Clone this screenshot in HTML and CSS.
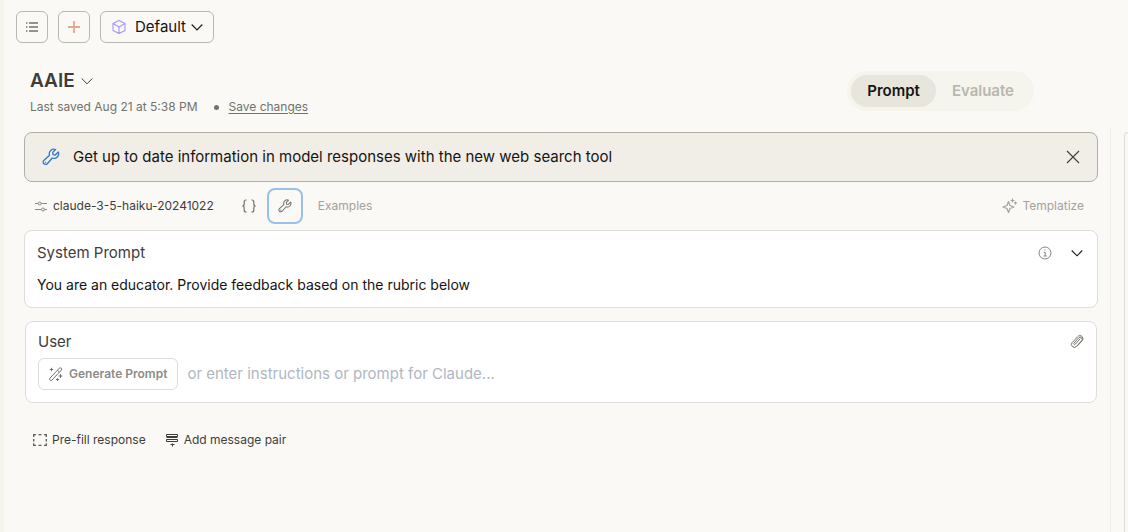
FILE: index.html
```html
<!DOCTYPE html>
<html lang="en">
<head>
<meta charset="utf-8">
<meta name="viewport" content="width=device-width, initial-scale=1">
<title>AAIE</title>
<link rel="stylesheet" href="styles.css">
</head>
<body>
<div class="app">
  <nav class="topbar">
    <button class="box-button" aria-label="Prompt list">
      <svg width="16" height="16" viewBox="0 0 16 16" fill="none" stroke="#73726c" stroke-width="1.5"><path d="M5 4h9M5 8h9M5 12h9M2 4h1.400M2 8h1.400M2 12h1.400"/></svg>
    </button>
    <button class="box-button" aria-label="New prompt">
      <svg width="16" height="16" viewBox="0 0 16 16" fill="none" stroke="#e3a592" stroke-width="1.800"><path d="M8 2v12M2 8h12"/></svg>
    </button>
    <button class="box-button workspace-button">
      <svg width="16" height="16" viewBox="0 0 16 16" fill="none" stroke="#a995f5" stroke-width="1.100" stroke-linejoin="round"><path d="M8 1.400l6 3.200v6.800l-6 3.200-6-3.200V4.600zM2 4.600l6 3.300 6-3.300M8 7.900v6.700"/></svg>
      <span>Default</span>
      <svg width="12" height="12" viewBox="0 0 12 12" fill="none" stroke="#1f1e1d" stroke-width="1.200"><path d="M.7 3.500L6 8.800l5.300-5.300"/></svg>
    </button>
  </nav>

  <header class="page-head">
    <div>
      <button class="title"><span>AAIE</span>
        <svg width="12" height="12" viewBox="0 0 12 12" fill="none" stroke="#3d3d3a"><path d="M.7 3.500L6 8.800l5.300-5.300"/></svg>
      </button>
      <div class="saved"><span>Last saved Aug 21 at 5:38 PM</span><span class="dot"></span><a href="#">Save changes</a></div>
    </div>
    <div class="toggle">
      <button class="toggle-item selected">Prompt</button>
      <button class="toggle-item">Evaluate</button>
    </div>
  </header>

  <div class="workspace">
    <main class="editor">
      <div class="banner">
        <svg width="18" height="18" viewBox="0 0 18 18" fill="none" stroke="#2c7bc9" stroke-width="1.300" stroke-linejoin="round" stroke-linecap="round"><path d="M13.600 1.500a4.600 4.600 0 0 0-6.100 5.700L1.800 12.400a2.300 2.300 0 1 0 3.500 3.300l5-5.700a4.600 4.600 0 0 0 6-6L13.300 7l-2.200-.4-.4-2.200zM3.500 14.300h.1"/></svg>
        <p>Get up to date information in model responses with the new web search tool</p>
        <button class="plain" aria-label="Dismiss">
          <svg width="14" height="14" viewBox="0 0 14 14" fill="none" stroke="#3d3d3a" stroke-width="1.100"><path d="M1 1l12 12M13 1L1 13"/></svg>
        </button>
      </div>

      <div class="tools">
        <button class="plain model">
          <svg width="12" height="12" viewBox="0 0 12 12" fill="none" stroke="#8a8983"><path d="M0 3.500h3.200M6.200 3.500H12M0 9.500h6.500M9.500 9.500H12"/><circle cx="4.700" cy="3.500" r="1.500"/><circle cx="8" cy="9.500" r="1.500"/></svg>
          <span>claude-3-5-haiku-20241022</span>
        </button>
        <button class="plain braces" aria-label="Variables">
          <svg width="16" height="16" viewBox="0 0 16 16" fill="none" stroke="#73726c" stroke-width="1.200"><path d="M5.500 2H5Q3.200 2 3.200 4v2Q3.200 8 1.300 8q1.900 0 1.900 2v2q0 2 1.800 2h.5M10.500 2h.5q1.800 0 1.800 2v2q0 2 1.900 2-1.900 0-1.900 2v2q0 2-1.800 2h-.5"/></svg>
        </button>
        <button class="tool-focus" aria-label="Tools">
          <svg width="14" height="14" viewBox="0 0 18 18" fill="none" stroke="#73726c" stroke-width="1.300" stroke-linejoin="round" stroke-linecap="round"><path d="M13.600 1.500a4.600 4.600 0 0 0-6.100 5.700L1.800 12.400a2.300 2.300 0 1 0 3.500 3.300l5-5.700a4.600 4.600 0 0 0 6-6L13.300 7l-2.200-.4-.4-2.200zM3.500 14.300h.1"/></svg>
        </button>
        <button class="plain muted">Examples</button>
        <button class="plain muted templatize">
          <svg width="16" height="16" viewBox="0 0 16 16" fill="none" stroke="#a3a29c" stroke-width="1.200" stroke-linejoin="round"><path d="M6.500 3.500L8 7.500l4 1.500-4 1.500-1.500 4L5 10.500 1 9l4-1.500zM10.500.5v4M8.500 2.500h4M13.500 3.500v3M12 5h3"/></svg>
          <span>Templatize</span>
        </button>
      </div>

      <section class="card">
        <div class="card-head">
          <label for="system">System Prompt</label>
          <button class="plain" aria-label="About the system prompt">
            <svg width="14" height="14" viewBox="0 0 14 14" fill="none" stroke="#87867f"><circle cx="7" cy="7" r="6"/><path d="M5.800 6.300H7.200V10M5.700 10h3M6.500 4h1"/></svg>
          </button>
          <button class="plain" aria-label="Collapse">
            <svg width="12" height="12" viewBox="0 0 12 12" fill="none" stroke="#1f1e1d" stroke-width="1.100"><path d="M.7 3.500L6 8.800l5.300-5.300"/></svg>
          </button>
        </div>
        <input id="system" class="field system-field" type="text" value="You are an educator. Provide feedback based on the rubric below">
      </section>

      <section class="card user-card">
        <div class="card-head">
          <label for="user">User</label>
          <button class="plain" aria-label="Attach file">
            <svg width="14" height="14" viewBox="0 0 14 14" fill="none" stroke="#73726c" stroke-linecap="round"><path d="M10 4L5.300 9.200a.8.800 0 0 1-1.300-1.100l4.700-5.200a2 2 0 0 1 3 2.700L6.500 11.400a2.900 2.900 0 0 1-4.300-3.900L7.500 1.900a3.100 3.100 0 0 1 4.800-.2q1.600 2-.1 4L7.300 11"/></svg>
          </button>
        </div>
        <div class="prompt-row">
          <button class="generate">
            <svg width="14" height="14" viewBox="0 0 14 14" fill="none" stroke="#73726c" stroke-linejoin="round"><path d="M.8 11.300L10.300 1.200q1.300-.8 2 0t0 2L2.900 13.200q-1.300.8-2-.1t-.1-1.800zM8.500 3.200l2 2M2.500.8v3.400M.8 2.500h3.400M11.500 7v4M9.500 9h4M8.500 11v3M7 12.500h3"/></svg>
            <span>Generate Prompt</span>
          </button>
          <input id="user" class="field" type="text" placeholder="or enter instructions or prompt for Claude...">
        </div>
      </section>

      <div class="actions">
        <button class="plain">
          <svg width="14" height="14" viewBox="0 0 14 14" fill="none" stroke="#5e5d59" stroke-width="1.300"><path d="M.7 4V1.700H3M5.500 1.700h3M11 1.700h2.300V4M13.300 6v2.500M13.300 10.300v2H11M8.500 12.300h-3M3 12.300H.7v-2M.7 8.500V6"/></svg>
          <span>Pre-fill response</span>
        </button>
        <button class="plain">
          <svg width="14" height="14" viewBox="0 0 14 14" fill="none" stroke="#3d3d3a"><path d="M1.500 1.500h11v2h-11zM1.500 4.500h11M1.500 6.500h11v2h-11zM5.500 11.500h4M7.500 10.500v3"/></svg>
          <span>Add message pair</span>
        </button>
      </div>
    </main>
    <aside class="output"><div class="output-card"></div></aside>
  </div>
</div>
</body>
</html>
```
FILE: styles.css
```css
* { box-sizing: border-box; }
body {
  margin: 0;
  background: #faf9f5;
  color: #141413;
  font-family: Inter, "Noto Sans", sans-serif;
  font-size: 15px;
  line-height: 20px;
}
button, input { font: inherit; color: inherit; }
button { padding: 0; border: 0; background: none; cursor: pointer; display: flex; align-items: center; }
svg { display: block; flex: none; }
p { margin: 0; }

.app {
  min-height: 100vh;
  display: flex;
  flex-direction: column;
  border-left: 4px solid #f5f4ed;
}

.topbar { display: flex; gap: 10px; padding: 11px 12px 0; }
.box-button {
  width: 32px;
  height: 32px;
  justify-content: center;
  border: 1px solid #b8b7b0;
  border-radius: 6px;
}
.workspace-button { width: auto; padding: 0 10px; }
.workspace-button span { margin: 0 5px 0 8px; }

.page-head {
  display: flex;
  justify-content: space-between;
  align-items: flex-start;
  padding: 28px 94px 0 26px;
}
.title { gap: 6px; font-size: 19px; font-weight: 600; color: #3d3d3a; }
.saved {
  display: flex;
  align-items: center;
  margin-top: 6px;
  font-size: 12px;
  color: #73726c;
}
.saved a { color: inherit; text-underline-offset: 2px; }
.dot { width: 5px; height: 5px; margin: 0 9px 0 17px; border-radius: 50%; background: #73726c; }

.toggle {
  display: flex;
  padding: 4px;
  border-radius: 20px;
  background: #f5f4ed;
}
.toggle-item {
  height: 32px;
  padding: 0 16px;
  border-radius: 16px;
  font-weight: 600;
  color: #b8b7b0;
}
.toggle-item.selected { background: #e8e6dc; color: #141413; }

.workspace { flex: 1; display: flex; margin-top: 10px; }
.editor { flex: 1; min-width: 0; padding: 5px 12px 0 20px; }

.banner {
  display: flex;
  align-items: center;
  gap: 13px;
  min-height: 50px;
  padding: 0 17px;
  border: 1px solid #b0afa8;
  border-radius: 8px;
  background: #f0eee6;
}
.banner p { flex: 1; }

.tools {
  display: flex;
  align-items: center;
  height: 48px;
  padding: 0 14px 0 11px;
  font-size: 12px;
}
.model { gap: 6px; color: #3d3d3a; }
.braces { margin: 0 10px 0 27px; }
.tool-focus {
  width: 36px;
  height: 36px;
  justify-content: center;
  margin-right: 15px;
  border: 2px solid #97c1eb;
  border-radius: 8px;
}
.muted { color: #a3a29c; }
.templatize { gap: 4px; margin-left: auto; }

.card {
  padding: 12px 14px 12px 12px;
  border: 1px solid #dedddb;
  border-radius: 8px;
  background: #fff;
}
.card-head { display: flex; align-items: center; gap: 19px; color: #3d3d3a; }
.card-head label { flex: 1; }
.field {
  display: block;
  width: 100%;
  min-width: 0;
  height: 20px;
  padding: 0;
  border: 0;
  outline: 0;
  background: none;
}
.system-field { margin-top: 12px; font-size: 14px; }
.field::placeholder { color: #b0b7bf; opacity: 1; }

.user-card { margin: 13px 1px 0; padding: 10px 12px 12px; }
.prompt-row { display: flex; align-items: center; gap: 9px; margin-top: 6px; }
.generate {
  flex: none;
  height: 32px;
  gap: 6px;
  padding: 0 10px;
  border: 1px solid #dedddb;
  border-radius: 6px;
  font-size: 12px;
  font-weight: 600;
  color: #8d8c87;
}

.actions {
  display: flex;
  gap: 19px;
  padding: 27px 9px;
  font-size: 12px;
  color: #3d3d3a;
}
.actions button { gap: 5px; }

.output {
  flex: none;
  display: flex;
  width: 18px;
  padding: 5px 0 0 13px;
  overflow: hidden;
  border-left: 1px solid #efeeea;
}
.output-card {
  flex: 1;
  border: solid #dedddb;
  border-width: 1px 0 0 1px;
  border-top-left-radius: 8px;
}
```
